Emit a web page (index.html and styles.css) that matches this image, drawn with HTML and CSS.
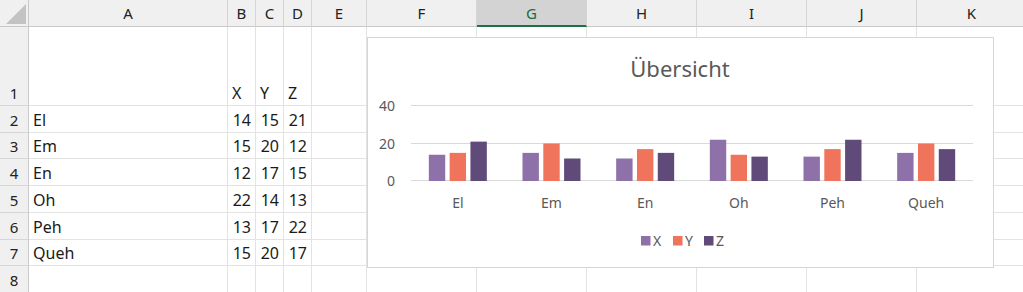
FILE: index.html
```html
<!DOCTYPE html>
<html lang="de">
<head>
  <meta charset="utf-8">
  <meta name="viewport" content="width=device-width, initial-scale=1.0">
  <link rel="stylesheet" href="styles.css">
  <title>Übersicht</title>
</head>
<body>
  <div class="sheet">
    <!-- Spaltenköpfe -->
    <div class="corner"><span class="corner-mark"></span></div>
    <div class="col-head">A</div>
    <div class="col-head">B</div>
    <div class="col-head">C</div>
    <div class="col-head">D</div>
    <div class="col-head">E</div>
    <div class="col-head">F</div>
    <div class="col-head selected">G</div>
    <div class="col-head">H</div>
    <div class="col-head">I</div>
    <div class="col-head">J</div>
    <div class="col-head">K</div>

    <div class="row-head">1</div>
    <div class="cell"></div><div class="cell">X</div><div class="cell">Y</div><div class="cell">Z</div>
    <div class="cell"></div><div class="cell"></div><div class="cell"></div><div class="cell"></div><div class="cell"></div><div class="cell"></div><div class="cell"></div>

    <div class="row-head">2</div>
    <div class="cell">El</div><div class="cell num">14</div><div class="cell num">15</div><div class="cell num">21</div>
    <div class="cell"></div><div class="cell"></div><div class="cell"></div><div class="cell"></div><div class="cell"></div><div class="cell"></div><div class="cell"></div>

    <div class="row-head">3</div>
    <div class="cell">Em</div><div class="cell num">15</div><div class="cell num">20</div><div class="cell num">12</div>
    <div class="cell"></div><div class="cell"></div><div class="cell"></div><div class="cell"></div><div class="cell"></div><div class="cell"></div><div class="cell"></div>

    <div class="row-head">4</div>
    <div class="cell">En</div><div class="cell num">12</div><div class="cell num">17</div><div class="cell num">15</div>
    <div class="cell"></div><div class="cell"></div><div class="cell"></div><div class="cell"></div><div class="cell"></div><div class="cell"></div><div class="cell"></div>

    <div class="row-head">5</div>
    <div class="cell">Oh</div><div class="cell num">22</div><div class="cell num">14</div><div class="cell num">13</div>
    <div class="cell"></div><div class="cell"></div><div class="cell"></div><div class="cell"></div><div class="cell"></div><div class="cell"></div><div class="cell"></div>

    <div class="row-head">6</div>
    <div class="cell">Peh</div><div class="cell num">13</div><div class="cell num">17</div><div class="cell num">22</div>
    <div class="cell"></div><div class="cell"></div><div class="cell"></div><div class="cell"></div><div class="cell"></div><div class="cell"></div><div class="cell"></div>

    <div class="row-head">7</div>
    <div class="cell">Queh</div><div class="cell num">15</div><div class="cell num">20</div><div class="cell num">17</div>
    <div class="cell"></div><div class="cell"></div><div class="cell"></div><div class="cell"></div><div class="cell"></div><div class="cell"></div><div class="cell"></div>

    <div class="row-head">8</div>
    <div class="cell"></div><div class="cell"></div><div class="cell"></div><div class="cell"></div>
    <div class="cell"></div><div class="cell"></div><div class="cell"></div><div class="cell"></div><div class="cell"></div><div class="cell"></div><div class="cell"></div>

    <!-- Diagramm über den Zellen -->
    <div class="chart">
      <svg class="chart-svg" width="625" height="229" viewBox="0 0 625 229">
        <text class="chart-title" x="312" y="39" text-anchor="middle">Übersicht</text>

        <g class="grid">
          <line x1="43" y1="67.5" x2="605" y2="67.5"/>
          <line x1="43" y1="105.5" x2="605" y2="105.5"/>
          <line x1="43" y1="142.5" x2="605" y2="142.5"/>
        </g>

        <g class="axis" text-anchor="end">
          <text x="27" y="72.5">40</text>
          <text x="27" y="110.5">20</text>
          <text x="27" y="147.5">0</text>
        </g>

        <!-- El -->
        <rect class="bar-x" x="60.83" y="116.75" width="16.4" height="26.25"/>
        <rect class="bar-y" x="81.63" y="114.88" width="16.4" height="28.13"/>
        <rect class="bar-z" x="102.43" y="103.63" width="16.4" height="39.38"/>
        <!-- Em -->
        <rect class="bar-x" x="154.5" y="114.88" width="16.4" height="28.13"/>
        <rect class="bar-y" x="175.3" y="105.5" width="16.4" height="37.5"/>
        <rect class="bar-z" x="196.1" y="120.5" width="16.4" height="22.5"/>
        <!-- En -->
        <rect class="bar-x" x="248.17" y="120.5" width="16.4" height="22.5"/>
        <rect class="bar-y" x="268.97" y="111.13" width="16.4" height="31.88"/>
        <rect class="bar-z" x="289.77" y="114.88" width="16.4" height="28.13"/>
        <!-- Oh -->
        <rect class="bar-x" x="341.83" y="101.75" width="16.4" height="41.25"/>
        <rect class="bar-y" x="362.63" y="116.75" width="16.4" height="26.25"/>
        <rect class="bar-z" x="383.43" y="118.63" width="16.4" height="24.38"/>
        <!-- Peh -->
        <rect class="bar-x" x="435.5" y="118.63" width="16.4" height="24.38"/>
        <rect class="bar-y" x="456.3" y="111.13" width="16.4" height="31.88"/>
        <rect class="bar-z" x="477.1" y="101.75" width="16.4" height="41.25"/>
        <!-- Queh -->
        <rect class="bar-x" x="529.17" y="114.88" width="16.4" height="28.13"/>
        <rect class="bar-y" x="549.97" y="105.5" width="16.4" height="37.5"/>
        <rect class="bar-z" x="570.77" y="111.13" width="16.4" height="31.88"/>

        <g class="axis" text-anchor="middle">
          <text x="89.83" y="170">El</text>
          <text x="183.5" y="170">Em</text>
          <text x="277.17" y="170">En</text>
          <text x="370.83" y="170">Oh</text>
          <text x="464.5" y="170">Peh</text>
          <text x="558.17" y="170">Queh</text>
        </g>

        <g class="legend">
          <rect class="bar-x" x="273" y="198" width="9.5" height="9.5"/>
          <text x="285" y="208">X</text>
          <rect class="bar-y" x="305" y="198" width="9.5" height="9.5"/>
          <text x="317" y="208">Y</text>
          <rect class="bar-z" x="336" y="198" width="9.5" height="9.5"/>
          <text x="348" y="208">Z</text>
        </g>
      </svg>
    </div>
  </div>
</body>
</html>
```

FILE: styles.css
```css
body {
  margin: 0;
  padding: 0;
  background-color: #ffffff;
  font-family: "Noto Sans", "Liberation Sans", Arial, sans-serif;
  color: #1a1a1a;
  overflow: hidden;
}

.sheet {
  position: relative;
  display: grid;
  grid-template-columns: 29px 199px 28px 28px 28px 55px repeat(6, 110px);
  grid-template-rows: 27px 79px 27px 26px 27px 27px 27px 26px 27px;
}

.sheet > div {
  box-sizing: border-box;
}

.corner {
  background-color: #f0f0f0;
  border-right: 1px solid #c9c9c9;
  border-bottom: 1px solid #c9c9c9;
  display: flex;
  align-items: flex-end;
  justify-content: flex-end;
  padding: 0 2px 2px 0;
}

.corner-mark {
  width: 0;
  height: 0;
  border-left: 20px solid transparent;
  border-bottom: 20px solid #c3c3c3;
}

.col-head {
  background-color: #f0f0f0;
  border-right: 1px solid #d5d5d5;
  border-bottom: 1px solid #c9c9c9;
  display: flex;
  align-items: center;
  justify-content: center;
  font-size: 15px;
  color: #222222;
}

.col-head.selected {
  background-color: #d3d3d3;
  color: #1d6b40;
  border-bottom: 2px solid #1e7145;
}

.row-head {
  background-color: #f0f0f0;
  border-right: 1px solid #c9c9c9;
  border-bottom: 1px solid #d5d5d5;
  display: flex;
  align-items: flex-end;
  justify-content: center;
  font-size: 15px;
  line-height: 20px;
  padding-bottom: 2px;
  color: #222222;
}

.cell {
  border-right: 1px solid #e3e3e3;
  border-bottom: 1px solid #e3e3e3;
  display: flex;
  align-items: flex-end;
  padding: 0 4px 2px 4px;
  font-size: 16px;
  line-height: 20px;
  white-space: nowrap;
}

.cell.num {
  justify-content: flex-end;
}

/* Diagramm liegt über dem Zellraster */
.chart {
  position: absolute;
  left: 367px;
  top: 37px;
  width: 627px;
  height: 231px;
  border: 1px solid #d6d6d6;
  background-color: #ffffff;
}

.chart-svg {
  display: block;
  font-family: "Noto Sans", "Liberation Sans", Arial, sans-serif;
}

.chart-title {
  font-size: 22px;
  fill: #595959;
}

.grid line {
  stroke: #d9d9d9;
  stroke-width: 1;
}

.axis {
  font-size: 14px;
  fill: #595959;
}

.legend {
  font-size: 14px;
  fill: #595959;
}

.bar-x {
  fill: #8e71a9;
}

.bar-y {
  fill: #f0745b;
}

.bar-z {
  fill: #5f4a7a;
}
```
